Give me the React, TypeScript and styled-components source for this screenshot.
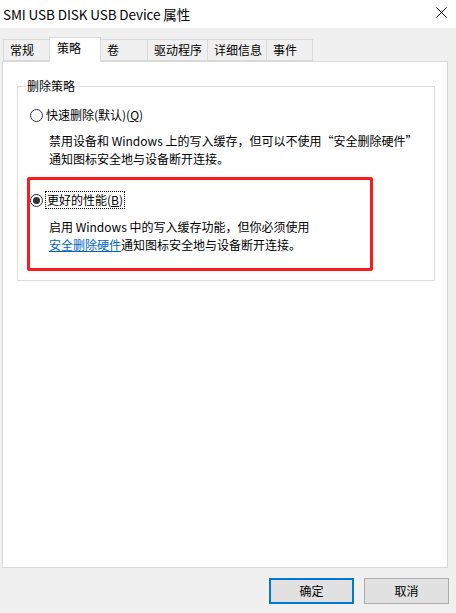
import React from "react";
import styled, { createGlobalStyle } from "styled-components";

const Global = createGlobalStyle`
  html, body { margin: 0; padding: 0; background: #f0f0f0; }
  body {
    font-family: "Noto Sans CJK SC", "Noto Sans", sans-serif;
    font-size: 12px;
    color: #000;
  }
`;

const Window = styled.div`
  width: 456px;
  height: 613px;
  background: #f0f0f0;
  display: flex;
  flex-direction: column;
  overflow: hidden;
`;

const TitleBar = styled.div`
  height: 28px;
  flex: none;
  background: #fff;
  display: flex;
  align-items: center;
  justify-content: space-between;
  padding: 0 9px 0 3px;
`;

const Title = styled.div`
  font-size: 13.5px;
  letter-spacing: -0.1px;
  line-height: 20px;
  margin-top: -1px;
  color: #000;
  white-space: nowrap;
`;

const CloseButton = styled.div`
  width: 11px;
  height: 11px;
  display: flex;
  margin-top: -3px;
`;

const TabStrip = styled.div`
  display: flex;
  align-items: flex-end;
  height: 24px;
  margin-top: 9px;
  padding-left: 3px;
  position: relative;
  z-index: 1;
`;

const Tab = styled.div<{ $w: number; $active?: boolean }>`
  box-sizing: border-box;
  width: ${(p) => p.$w}px;
  height: ${(p) => (p.$active ? 25 : 22)}px;
  margin-right: -1px;
  margin-bottom: ${(p) => (p.$active ? -1 : 0)}px;
  border: 1px solid #d9d9d9;
  border-bottom: ${(p) => (p.$active ? "none" : "1px solid #d9d9d9")};
  background: ${(p) => (p.$active ? "#fff" : "#f0f0f0")};
  padding-left: ${(p) => (p.$active ? 7 : 6)}px;
  padding-top: 2px;
  line-height: 16px;
  font-size: 12px;
  white-space: nowrap;
  position: relative;
  z-index: ${(p) => (p.$active ? 2 : 1)};
`;

const Panel = styled.div`
  box-sizing: border-box;
  width: 446px;
  height: 507px;
  margin-left: 2px;
  background: #fff;
  border: 1px solid #d9d9d9;
  padding: 24px 12px 0 14px;
  flex: none;
`;

const GroupBox = styled.div`
  position: relative;
  border: 1px solid #dcdcdc;
  padding: 19px 12px 9px 12px;
`;

const Legend = styled.div`
  position: absolute;
  top: -9px;
  left: 8px;
  padding: 0 1px;
  background: #fff;
  line-height: 16px;
  color: #000;
`;

const OptionRow = styled.div`
  display: flex;
  align-items: center;
  height: 18px;
`;

const Radio = styled.span<{ $checked?: boolean }>`
  box-sizing: border-box;
  width: 13px;
  height: 13px;
  border-radius: 50%;
  border: 1px solid #333;
  display: flex;
  align-items: center;
  justify-content: center;
  flex: none;
  &::after {
    content: "";
    display: ${(p) => (p.$checked ? "block" : "none")};
    width: 7px;
    height: 7px;
    border-radius: 50%;
    background: #333;
  }
`;

const Label = styled.span<{ $focused?: boolean }>`
  margin-left: ${(p) => (p.$focused ? 2 : 3)}px;
  line-height: 16px;
  padding: 0 ${(p) => (p.$focused ? 1 : 0)}px;
  border: ${(p) => (p.$focused ? "1px dotted #000" : "none")};
  white-space: nowrap;
`;

const Mnemonic = styled.span`
  text-decoration: underline;
`;

const Description = styled.div<{ $gap: number }>`
  margin-top: ${(p) => p.$gap}px;
  padding-left: 19px;
  line-height: 18px;
  color: #000;
`;

const Link = styled.span`
  color: #0066cc;
  text-decoration: underline;
`;

const Highlight = styled.div`
  width: 346px;
  box-sizing: border-box;
  margin: 9px 0 0 -3px;
  border: 3px solid #fa1c1c;
  border-radius: 2px;
  padding: 11px 0 14px 0;
`;

const Footer = styled.div`
  display: flex;
  justify-content: flex-end;
  gap: 10px;
  padding: 10px 7px 0 0;
`;

const Button = styled.button<{ $primary?: boolean }>`
  box-sizing: border-box;
  width: 85px;
  height: 26px;
  font-family: "Noto Sans CJK SC", "Noto Sans", sans-serif;
  font-size: 12px;
  color: #000;
  background: #e1e1e1;
  border: ${(p) => (p.$primary ? "2px solid #0078d7" : "1px solid #adadad")};
  padding: 0;
  line-height: 16px;
`;

const tabs = [
  { label: "常规", w: 47 },
  { label: "策略", w: 52, active: true },
  { label: "卷", w: 48 },
  { label: "驱动程序", w: 61 },
  { label: "详细信息", w: 60 },
  { label: "事件", w: 47 },
];

export default function App() {
  return (
    <Window>
      <Global />
      <TitleBar>
        <Title>SMI USB DISK USB Device 属性</Title>
        <CloseButton>
          <svg width="11" height="11" viewBox="0 0 11 11">
            <path d="M0.5 0.5 L10.5 10.5 M10.5 0.5 L0.5 10.5" stroke="#000" strokeWidth="1" fill="none" />
          </svg>
        </CloseButton>
      </TitleBar>
      <TabStrip>
        {tabs.map((t) => (
          <Tab key={t.label} $w={t.w} $active={t.active}>
            {t.label}
          </Tab>
        ))}
      </TabStrip>
      <Panel>
        <GroupBox>
          <Legend>删除策略</Legend>
          <OptionRow>
            <Radio />
            <Label>
              快速删除(默认)(<Mnemonic>Q</Mnemonic>)
            </Label>
          </OptionRow>
          <Description $gap={8}>
            禁用设备和 Windows 上的写入缓存，但可以不使用“安全删除硬件”
            <br />
            通知图标安全地与设备断开连接。
          </Description>
          <Highlight>
            <OptionRow>
              <Radio $checked />
              <Label $focused>
                更好的性能(<Mnemonic>B</Mnemonic>)
              </Label>
            </OptionRow>
            <Description $gap={9}>
              启用 Windows 中的写入缓存功能，但你必须使用
              <br />
              <Link>安全删除硬件</Link>通知图标安全地与设备断开连接。
            </Description>
          </Highlight>
        </GroupBox>
      </Panel>
      <Footer>
        <Button $primary>确定</Button>
        <Button>取消</Button>
      </Footer>
    </Window>
  );
}
